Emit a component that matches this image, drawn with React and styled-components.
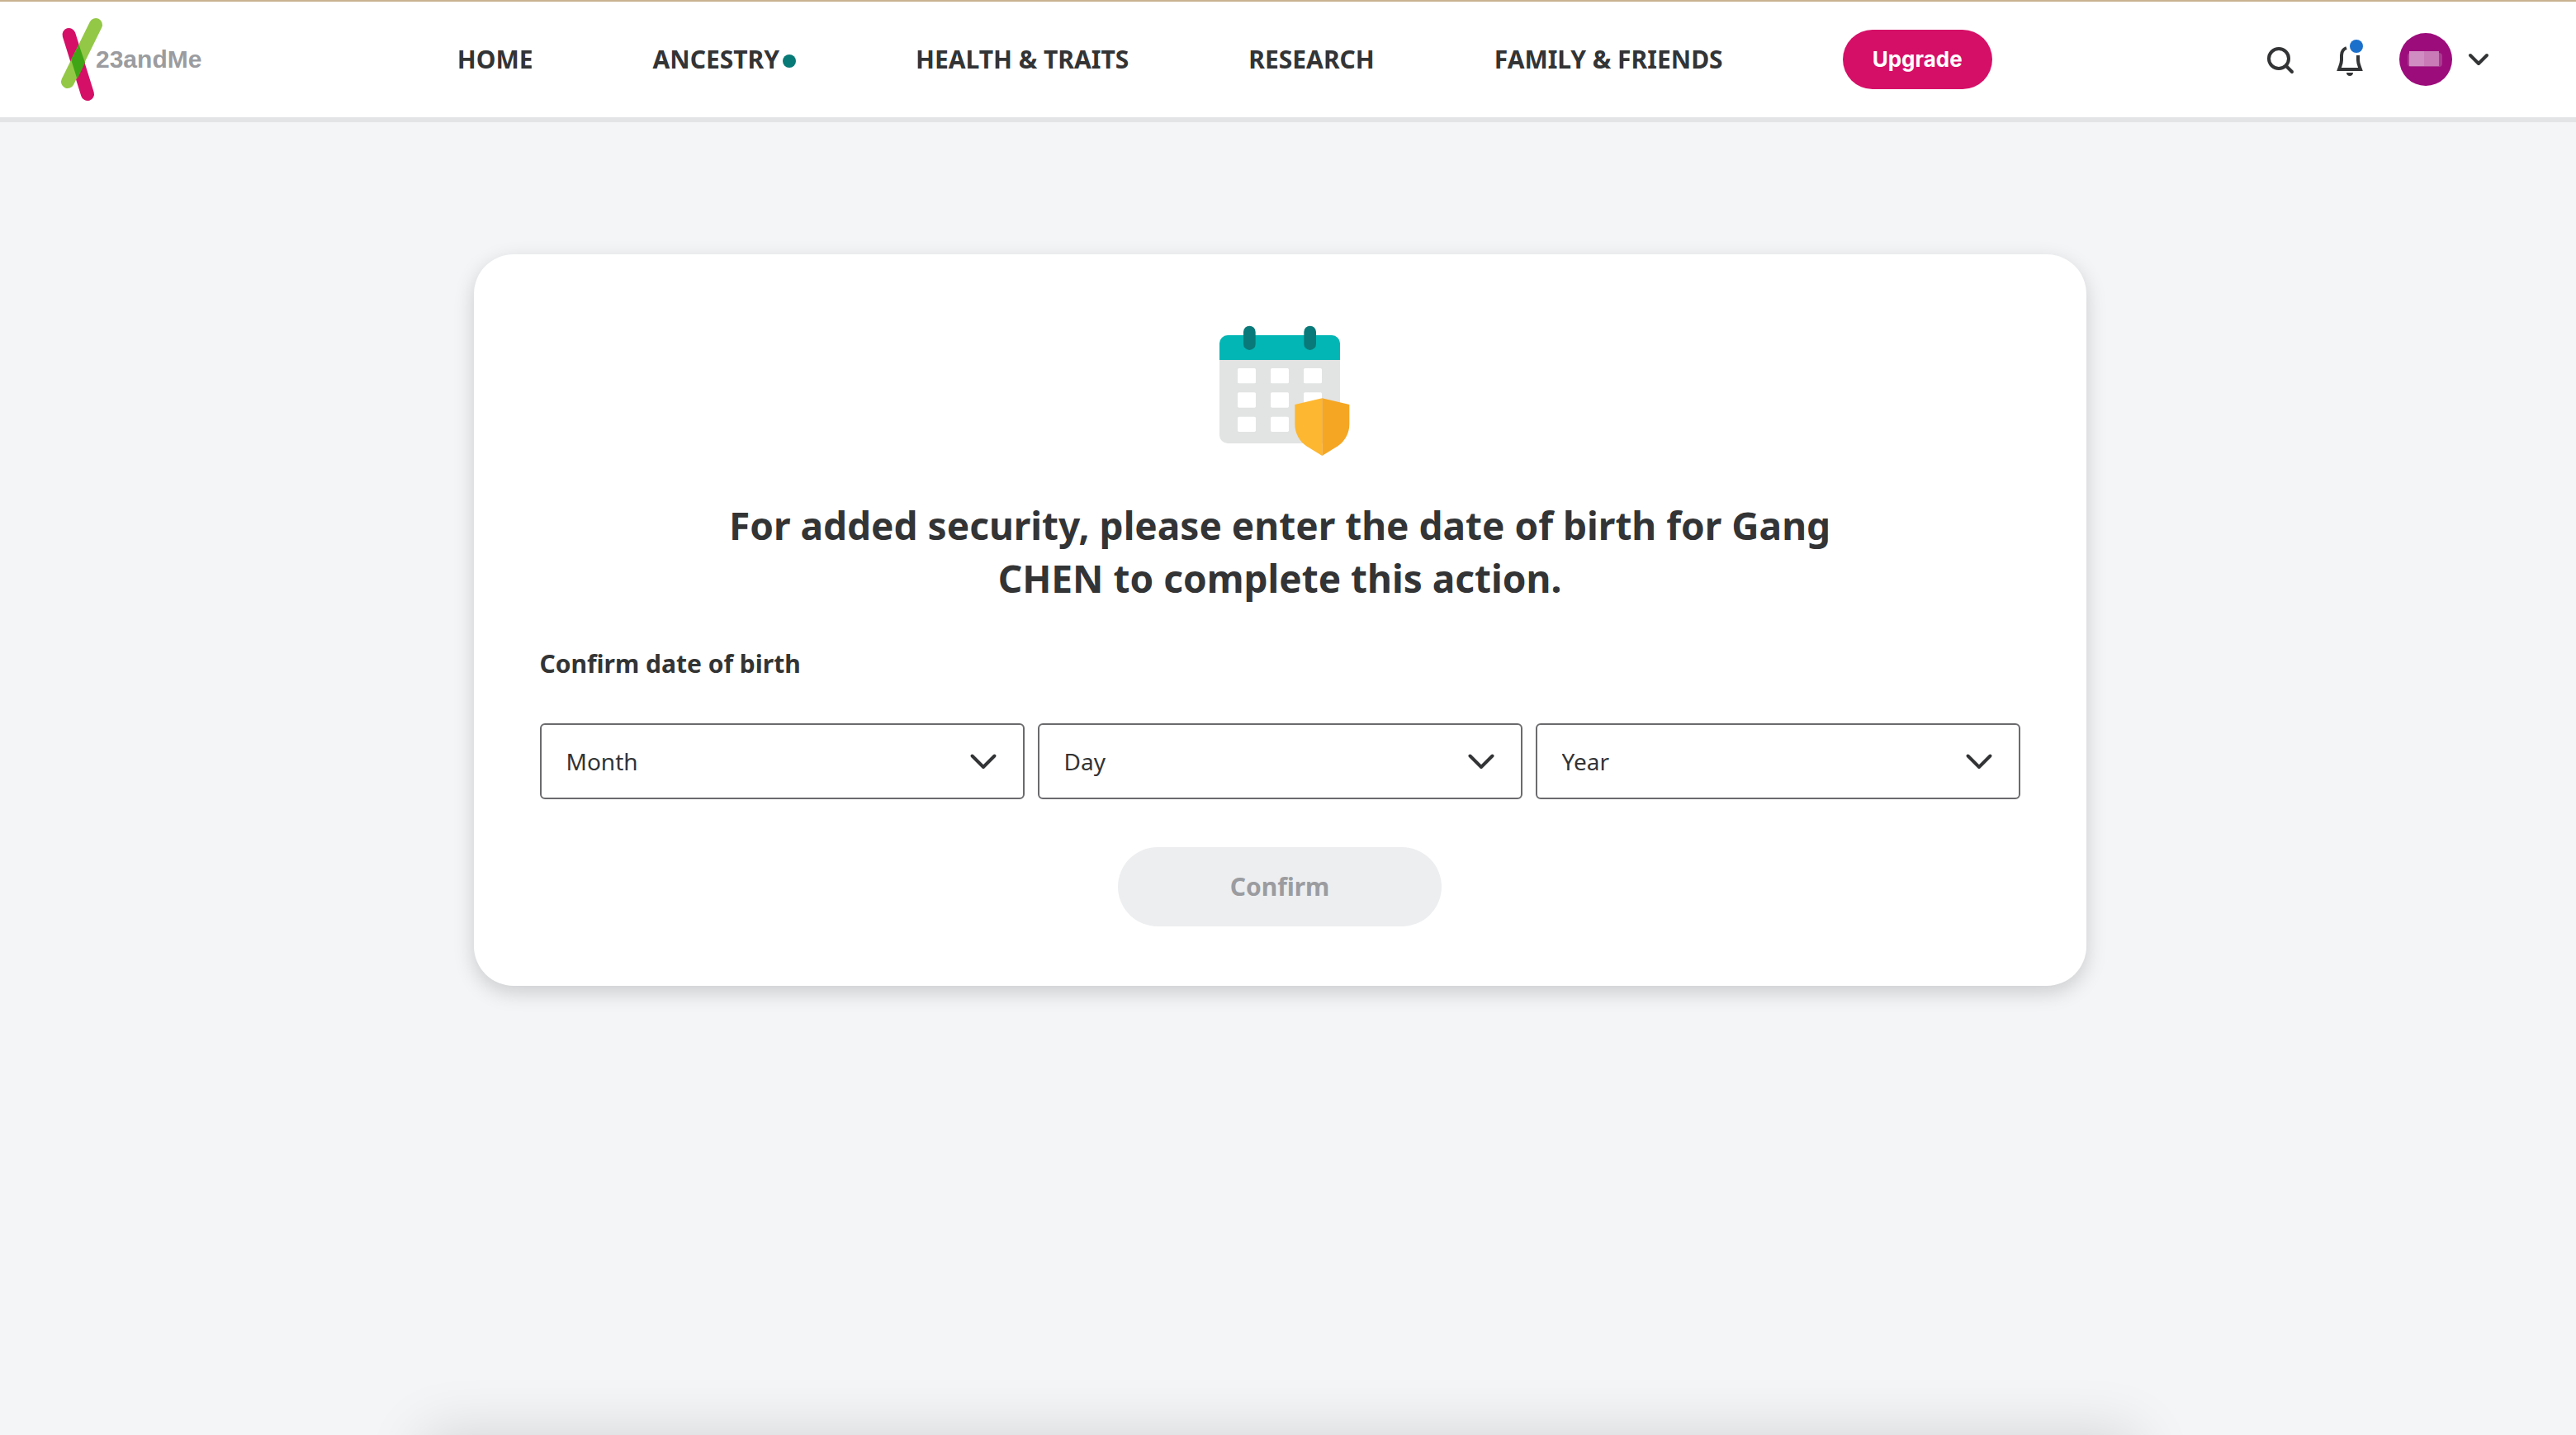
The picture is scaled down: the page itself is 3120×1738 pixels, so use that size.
import React from "react";
import styled, { createGlobalStyle } from "styled-components";

const ink = "#333435";
const magenta = "#d50f67";

const GlobalStyle = createGlobalStyle`
  *, *::before, *::after { box-sizing: border-box; }
  body {
    margin: 0;
    background: #f3f5f7;
    color: ${ink};
    font-family: "Noto Sans", "Liberation Sans", sans-serif;
  }
  button, select { font-family: inherit; color: inherit; margin: 0; }
`;

const Page = styled.div`
  display: flex;
  flex-direction: column;
  min-height: 100vh;
  overflow: hidden;
`;

const Header = styled.header`
  display: flex;
  align-items: center;
  justify-content: space-between;
  height: 148px;
  padding: 0 106px 0 74px;
  background: #fff;
  border-top: 2px solid #c9b290;
  border-bottom: 6px solid #e2e4e6;
`;

const Brand = styled.a`
  display: flex;
  align-items: center;
  color: #9b9ca0;
  font: bold 30px/40px "Liberation Sans", Arial, sans-serif;
  text-decoration: none;
`;

const BrandMark = styled.svg`
  width: 50px;
  height: 104px;
  margin-right: -8px;
  overflow: visible;
`;

const Nav = styled.nav`
  display: flex;
  align-items: center;
  gap: 145px;
`;

const NavLink = styled.a`
  display: flex;
  align-items: center;
  gap: 4px;
  color: ${ink};
  font-size: 30px;
  font-weight: 700;
  line-height: 40px;
  text-decoration: none;
  white-space: nowrap;
`;

const NewDot = styled.span`
  width: 16px;
  height: 16px;
  margin-top: 4px;
  border-radius: 50%;
  background: #077a77;
`;

const UpgradeButton = styled.button`
  height: 72px;
  padding: 0 36px;
  border: 0;
  border-radius: 36px;
  background: ${magenta};
  color: #fff;
  font: 700 26px/40px Inter, "Noto Sans", sans-serif;
`;

const Actions = styled.div`
  display: flex;
  align-items: center;
  gap: 10px;
`;

const IconButton = styled.button`
  display: flex;
  align-items: center;
  justify-content: center;
  width: 76px;
  height: 76px;
  padding: 0;
  border: 0;
  background: none;
`;

const AccountButton = styled.button`
  display: flex;
  align-items: center;
  gap: 20px;
  padding: 0 0 0 12px;
  border: 0;
  background: none;
`;

const Icon = styled.svg`
  display: block;
  width: ${(p) => p.$w}px;
  height: ${(p) => p.$h}px;
  overflow: visible;
  fill: none;
  stroke: ${ink};
  stroke-width: 4;
  stroke-linecap: round;
  stroke-linejoin: ${(p) => p.$join || "round"};
`;

const Avatar = styled.svg`
  display: block;
  width: 64px;
  height: 64px;
`;

const Main = styled.main`
  display: flex;
  flex: 1;
  justify-content: center;
  align-items: flex-start;
  padding: 160px 20px 160px 0;
`;

const Card = styled.form`
  display: flex;
  flex-direction: column;
  align-items: center;
  width: 63%;
  padding: 84px 80px 72px;
  border-radius: 48px;
  background: #fff;
  box-shadow: 0 8px 24px rgba(0, 0, 0, 0.17);
`;

const Illustration = styled.svg`
  display: block;
  width: 160px;
  height: 160px;
  overflow: visible;
`;

const Title = styled.h1`
  max-width: 1400px;
  margin: 52px 0 48px;
  font-size: 46px;
  font-weight: 700;
  line-height: 64px;
  text-align: center;
`;

const DateGroup = styled.fieldset`
  width: 100%;
  margin: 0;
  padding: 0;
  border: 0;
`;

const Legend = styled.legend`
  padding: 0;
  font-size: 30px;
  font-weight: 700;
  line-height: 48px;
`;

const FieldRow = styled.div`
  display: grid;
  grid-template-columns: repeat(3, 1fr);
  gap: 16px;
  margin-top: 48px;
`;

const Field = styled.label`
  display: grid;
  grid-template-columns: 1fr 66px;
  align-items: center;
`;

const Select = styled.select`
  grid-area: 1 / 1 / 2 / 3;
  width: 100%;
  height: 92px;
  padding: 0 80px 0 30px;
  border: 2px solid #6b6b6e;
  border-radius: 6px;
  background: #fff;
  color: ${ink};
  font-size: 28px;
  line-height: 40px;
  appearance: none;
`;

const FieldArrow = styled(Icon)`
  grid-area: 1 / 2;
  pointer-events: none;
`;

const ConfirmButton = styled.button`
  width: 392px;
  height: 96px;
  margin-top: 58px;
  border: 0;
  border-radius: 48px;
  background: #edeef0;
  font-size: 30px;
  font-weight: 700;
  line-height: 48px;

  &:disabled { color: #9b9ca0; }
`;

const Footer = styled.footer`
  display: flex;
  justify-content: center;
  padding-right: 20px;
`;

const FooterEdge = styled.div`
  width: 63%;
  height: 1px;
  background: #e2e3e5;
  box-shadow: 0 60px 72px 60px rgba(0, 0, 0, 0.14);
`;

const months = ["January", "February", "March", "April", "May", "June", "July", "August", "September", "October", "November", "December"];
const days = Array.from({ length: 31 }, (_, i) => i + 1);
const years = Array.from({ length: 100 }, (_, i) => 2023 - i);

const links = [
  { label: "HOME" },
  { label: "ANCESTRY", isNew: true },
  { label: "HEALTH & TRAITS" },
  { label: "RESEARCH" },
  { label: "FAMILY & FRIENDS" },
];

function Logo() {
  return (
    <Brand href="#home">
      <BrandMark viewBox="0 0 50 104" aria-hidden="true">
        <line x1="9.500" y1="22" x2="32" y2="94" stroke={magenta} strokeWidth="16" strokeLinecap="round" />
        <line x1="42" y1="10" x2="8" y2="79" stroke="#93c846" strokeWidth="16" strokeLinecap="round" />
        <path d="M21.500 34 29 56 19.500 76 12 52z" fill="#3fa516" />
      </BrandMark>
      23andMe
    </Brand>
  );
}

function CalendarShield() {
  return (
    <Illustration viewBox="90 66 480 480" aria-hidden="true">
      <rect x="111" y="108" width="438" height="393" rx="30" fill="#e2e3e3" />
      <path d="M111 198v-60a30 30 0 0 1 30-30h378a30 30 0 0 1 30 30v60z" fill="#02b6b5" />
      <rect x="198" y="74" width="44" height="88" rx="22" fill="#097a79" />
      <rect x="418" y="74" width="44" height="88" rx="22" fill="#097a79" />
      {[228, 316, 404].map((y) =>
        [177, 297, 417].map((x) => <rect key={`${x}-${y}`} x={x} y={y} width="66" height="55" rx="5" fill="#fff" />)
      )}
      <path d="M484 337 385 360v72c0 34 18 62 42 79l57 35z" fill="#fdb730" />
      <path d="M484 337 583 360v72c0 34-18 62-42 79l-57 35z" fill="#f5a623" />
    </Illustration>
  );
}

function DateField({ label, options }) {
  return (
    <Field>
      <Select aria-label={label} defaultValue="">
        <option value="">{label}</option>
        {options.map((option) => (
          <option key={option}>{option}</option>
        ))}
      </Select>
      <FieldArrow $w={32} $h={20} viewBox="0 0 32 20" aria-hidden="true">
        <path d="M2.500 3.500 16 17 29.500 3.500" />
      </FieldArrow>
    </Field>
  );
}

export default function App() {
  return (
    <Page>
      <GlobalStyle />
      <Header>
        <Logo />
        <Nav>
          {links.map(({ label, isNew }) => (
            <NavLink key={label} href="#nav">
              {label}
              {isNew && <NewDot />}
            </NavLink>
          ))}
          <UpgradeButton type="button">Upgrade</UpgradeButton>
        </Nav>
        <Actions>
          <IconButton type="button" aria-label="Search">
            <Icon $w={32} $h={32} viewBox="-2 1 32 32">
              <circle cx="14" cy="16" r="12" />
              <path d="m23 25 7 7" />
            </Icon>
          </IconButton>
          <IconButton type="button" aria-label="Notifications">
            <Icon $w={32} $h={48} viewBox="0 2 32 48" $join="miter">
              <path d="M12 12C8 13.500 6 17 6 21v6c0 4-1.500 6.500-3 11h26c-1.500-4.500-3-7-3-11v-6" strokeLinecap="butt" />
              <path d="M12 42h8c0 2.500-1.800 4-4 4s-4-1.500-4-4z" fill={ink} stroke="none" />
              <circle cx="24" cy="10" r="8" fill="#1b70cc" stroke="none" />
            </Icon>
          </IconButton>
          <AccountButton type="button" aria-label="Account">
            <Avatar viewBox="0 0 64 64">
              <circle cx="32" cy="32" r="32" fill="#9c0c7b" />
              <rect x="10" y="24" width="42" height="17" rx="4" fill="#a93a90" />
              <rect x="12" y="22" width="18" height="18" fill="#d08dc1" />
              <rect x="30" y="22" width="18" height="18" fill="#c87bb6" />
            </Avatar>
            <Icon $w={24} $h={16} viewBox="0 0 24 16">
              <path d="m2 3 10 10L22 3" />
            </Icon>
          </AccountButton>
        </Actions>
      </Header>
      <Main>
        <Card>
          <CalendarShield />
          <Title>For added security, please enter the date of birth for Gang CHEN to complete this action.</Title>
          <DateGroup>
            <Legend>Confirm date of birth</Legend>
            <FieldRow>
              <DateField label="Month" options={months} />
              <DateField label="Day" options={days} />
              <DateField label="Year" options={years} />
            </FieldRow>
          </DateGroup>
          <ConfirmButton type="submit" disabled>Confirm</ConfirmButton>
        </Card>
      </Main>
      <Footer>
        <FooterEdge />
      </Footer>
    </Page>
  );
}
